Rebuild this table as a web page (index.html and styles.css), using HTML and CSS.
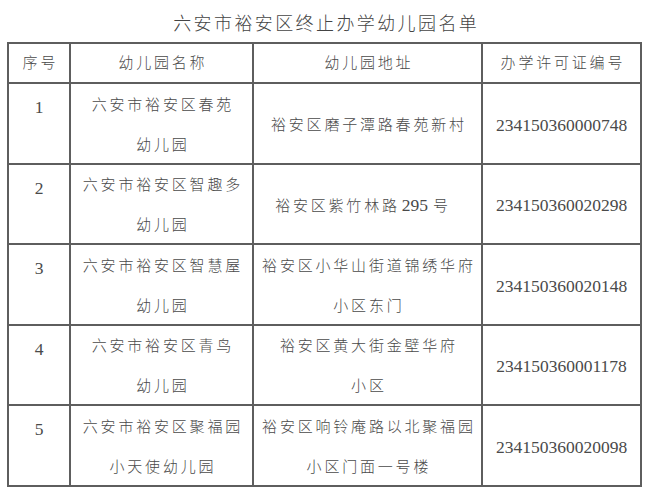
FILE: index.html
```html
<!DOCTYPE html>
<html lang="zh-CN">
<head>
<meta charset="utf-8">
<title>六安市裕安区终止办学幼儿园名单</title>
<link rel="stylesheet" href="styles.css">
</head>
<body>
<h1 class="title">六安市裕安区终止办学幼儿园名单</h1>
<div class="table">
  <div class="cell head"><div class="txt">序号</div></div>
  <div class="cell head"><div class="txt">幼儿园名称</div></div>
  <div class="cell head"><div class="txt">幼儿园地址</div></div>
  <div class="cell head"><div class="txt">办学许可证编号</div></div>

  <div class="cell idx num"><div class="txt">1</div></div>
  <div class="cell"><div class="txt">六安市裕安区春苑<br>幼儿园</div></div>
  <div class="cell"><div class="txt">裕安区磨子潭路春苑新村</div></div>
  <div class="cell num"><div class="txt">234150360000748</div></div>

  <div class="cell idx num"><div class="txt">2</div></div>
  <div class="cell"><div class="txt">六安市裕安区智趣多<br>幼儿园</div></div>
  <div class="cell shift"><div class="txt">裕安区紫竹林路<span class="num-in">295</span>号</div></div>
  <div class="cell num"><div class="txt">234150360020298</div></div>

  <div class="cell idx num"><div class="txt">3</div></div>
  <div class="cell"><div class="txt">六安市裕安区智慧屋<br>幼儿园</div></div>
  <div class="cell"><div class="txt">裕安区小华山街道锦绣华府<br>小区东门</div></div>
  <div class="cell num"><div class="txt">234150360020148</div></div>

  <div class="cell idx num"><div class="txt">4</div></div>
  <div class="cell"><div class="txt">六安市裕安区青鸟<br>幼儿园</div></div>
  <div class="cell"><div class="txt">裕安区黄大街金壁华府<br>小区</div></div>
  <div class="cell num"><div class="txt">234150360001178</div></div>

  <div class="cell idx num"><div class="txt">5</div></div>
  <div class="cell"><div class="txt">六安市裕安区聚福园<br>小天使幼儿园</div></div>
  <div class="cell"><div class="txt">裕安区响铃庵路以北聚福园<br>小区门面一号楼</div></div>
  <div class="cell num"><div class="txt">234150360020098</div></div>
</div>
</body>
</html>
```

FILE: styles.css
```css
html, body {
  margin: 0;
  padding: 0;
  background: #ffffff;
}

body {
  width: 650px;
  height: 496px;
  overflow: hidden;
  font-family: "Liberation Serif", "Noto Sans CJK SC", serif;
  color: #4a4a4a;
}

.title {
  margin: 0;
  height: 42px;
  padding-left: 2.4px;
  font-family: "Noto Sans CJK SC", sans-serif;
  font-weight: 300;
  font-size: 18px;
  letter-spacing: 2.4px;
  line-height: 44px;
  text-align: center;
  color: #444;
}

.table {
  margin-left: 7px;
  width: 631px;
  padding: 2px;
  display: grid;
  grid-template-columns: 60px 181px 227px 157px;
  grid-template-rows: 38px repeat(5, 78.5px);
  gap: 2px;
  background: #5e5e5e;
}

.cell {
  background: #ffffff;
  display: flex;
  flex-direction: column;
  justify-content: center;
  align-items: center;
  text-align: center;
  padding-left: 2.8px;
  padding-top: 3px;
  font-size: 15px;
  line-height: 40px;
  letter-spacing: 2.8px;
  font-weight: 300;
}

.txt {
  white-space: nowrap;
}

.cell.head {
  padding-top: 1px;
  line-height: 37px;
}

.num {
  font-family: "Liberation Serif", "Times New Roman", serif;
  font-size: 17.5px;
  letter-spacing: 0;
  padding-left: 0;
  font-weight: 400;
}

.num-in {
  font-family: "Liberation Serif", "Times New Roman", serif;
  font-size: 17.5px;
  letter-spacing: 0;
  font-weight: 400;
  margin: 0 5px 0 2px;
}

.cell.shift {
  padding-left: 0;
  padding-right: 9px;
}

.idx {
  justify-content: flex-start;
}
```
